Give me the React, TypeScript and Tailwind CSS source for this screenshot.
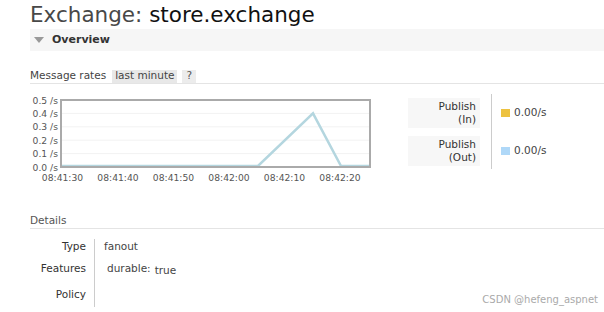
import React from "react";

const yTicks = [0.5, 0.4, 0.3, 0.2, 0.1, 0.0];
const xTicks = ["08:41:30", "08:41:40", "08:41:50", "08:42:00", "08:42:10", "08:42:20"];

// chart coords are relative to the svg, which sits at page x=30, y=94
function RateChart() {
  const left = 31;
  const right = 340;
  const top = 6;
  const bottom = 73;
  const yOf = (v: number) => bottom - v * ((bottom - top) / 0.5);
  return (
    <svg width={345} height={94} className="block">
      {yTicks.map((v) => (
        <g key={v}>
          {v > 0 && v < 0.5 && (
            <line x1={left} x2={right} y1={yOf(v)} y2={yOf(v)} stroke="#f2f2f2" strokeWidth={1} />
          )}
          <text x={28} y={yOf(v) + 3.5} textAnchor="end" fontSize={9.2} fill="#555">
            {v.toFixed(1)} /s
          </text>
        </g>
      ))}
      {xTicks.map((t, i) => (
        <text key={t} x={32.5 + i * 55.5} y={87} textAnchor="middle" fontSize={9.2} fill="#555">
          {t}
        </text>
      ))}
      <polyline
        points={`${left},${bottom - 1} 228,${bottom - 1} 283,${yOf(0.4)} 311,${bottom - 1} ${right},${bottom - 1}`}
        fill="none"
        stroke="#b4d6df"
        strokeWidth={2.5}
        strokeLinejoin="miter"
      />
      <rect x={left} y={top} width={right - left} height={bottom - top} fill="none" stroke="#aaa" strokeWidth={2} />
    </svg>
  );
}

function LegendLabel({ top, bottom }: { top: string; bottom: string }) {
  return (
    <div className="w-[72px] h-[30px] bg-[#f7f7f7] flex flex-col items-end justify-center pr-[4px] leading-[13px] text-[#333]">
      <span>{top}</span>
      <span>{bottom}</span>
    </div>
  );
}

export default function App() {
  return (
    <div
      className="relative w-[604px] h-[312px] overflow-hidden bg-white pl-[30px] text-[10.5px] text-[#444]"
      style={{ fontFamily: '"DejaVu Sans", Verdana, sans-serif' }}
    >
      <h1 className="pt-[2px] h-[28px] text-[21.5px] leading-[26px] text-[#111] whitespace-nowrap">
        <span className="text-[#484848]">Exchange:</span> store.exchange
      </h1>

      {/* Overview section */}
      <div className="mt-[1px] h-[22px] bg-[#f6f6f6] flex items-center pl-[4px] gap-[8px]">
        <div className="w-0 h-0 border-l-[5px] border-r-[5px] border-t-[6px] border-l-transparent border-r-transparent border-t-[#999]" />
        <span className="font-bold text-[11px] text-[#333]">Overview</span>
      </div>

      <div className="mt-[18px] h-[14px] flex items-center border-b border-[#e4e4e4] box-content">
        <span className="mr-[6px] text-[#444]">Message rates</span>
        <span className="h-[13px] flex items-center px-[3px] bg-[#e8e8e8] text-[#444]">last minute</span>
        <span className="ml-[5px] h-[13px] flex items-center px-[4px] bg-[#ececec] text-[#555]">?</span>
      </div>

      <div className="mt-[10px] flex">
        <RateChart />
        <div className="ml-[33px] pt-[4px] flex flex-col gap-[8px]">
          <LegendLabel top="Publish" bottom="(In)" />
          <LegendLabel top="Publish" bottom="(Out)" />
        </div>
        <div className="ml-[11px] w-px h-[75px] bg-[#ccc]" />
        <div className="ml-[9px] pt-[4px] flex flex-col gap-[8px]">
          <div className="h-[30px] flex items-center gap-[4px]">
            <span className="w-[9px] h-[8px] bg-[#edc240]" />
            <span>0.00/s</span>
          </div>
          <div className="h-[30px] flex items-center gap-[4px]">
            <span className="w-[9px] h-[8px] bg-[#afd8f8]" />
            <span>0.00/s</span>
          </div>
        </div>
      </div>

      {/* Details section */}
      <div className="mt-[25px] h-[15px] leading-[14px] border-b border-[#e4e4e4] box-content text-[#555]">Details</div>

      <div className="mt-[10px] flex">
        <div className="w-[56px] flex flex-col items-end text-[#333]">
          <div className="h-[22px]">Type</div>
          <div className="h-[25px]">Features</div>
          <div className="h-[20px] pt-[1px]">Policy</div>
        </div>
        <div className="ml-[8px] w-px h-[68px] bg-[#ccc]" />
        <div className="ml-[9px] flex flex-col text-[#444]">
          <div className="h-[22px]">fanout</div>
          <div className="h-[25px] pl-[3px] flex items-start">
            <span>durable:</span>
            <span className="ml-[4px] mt-[2px]">true</span>
          </div>
        </div>
      </div>

      <div className="absolute right-[6px] bottom-[5px] text-[10px] text-[#aaa]">CSDN @hefeng_aspnet</div>
    </div>
  );
}
